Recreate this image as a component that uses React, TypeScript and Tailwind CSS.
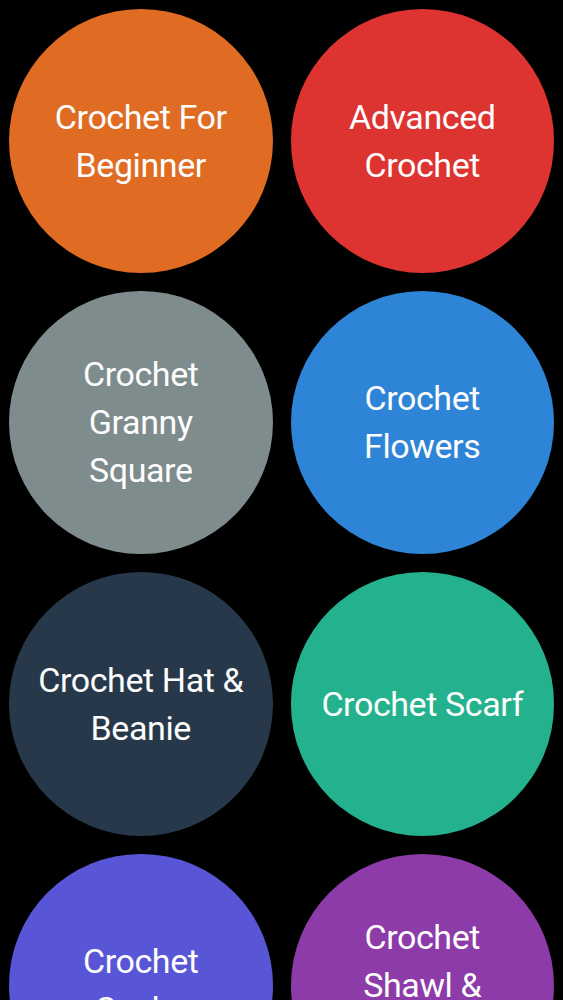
const items = [
  { lines: ["Crochet For", "Beginner"], color: "bg-[#e06b22]" },
  { lines: ["Advanced", "Crochet"], color: "bg-[#dd3331]" },
  { lines: ["Crochet", "Granny", "Square"], color: "bg-[#7f8c8d]" },
  { lines: ["Crochet", "Flowers"], color: "bg-[#2e84d6]" },
  { lines: ["Crochet Hat &", "Beanie"], color: "bg-[#28384b]" },
  { lines: ["Crochet Scarf"], color: "bg-[#24b28e]" },
  { lines: ["Crochet", "Socks"], color: "bg-[#5856d6]" },
  { lines: ["Crochet", "Shawl &", "Wrap"], color: "bg-[#8c3ba8]" },
];

export default function App() {
  return (
    <div className="h-[1000px] overflow-hidden bg-black">
      <div className="grid grid-cols-2 gap-[18px] px-[9px] pt-[9px]">
        {items.map((item, i) => (
          <div
            key={i}
            className={`${item.color} aspect-square rounded-full flex flex-col items-center justify-center text-center text-[#fdfdfd] text-[34px] leading-[48px] tracking-[-0.4px]`}
            style={{ fontFamily: "Roboto, 'Liberation Sans', sans-serif" }}
          >
            {item.lines.map((l) => (
              <span key={l} className="whitespace-nowrap">
                {l}
              </span>
            ))}
          </div>
        ))}
      </div>
    </div>
  );
}
